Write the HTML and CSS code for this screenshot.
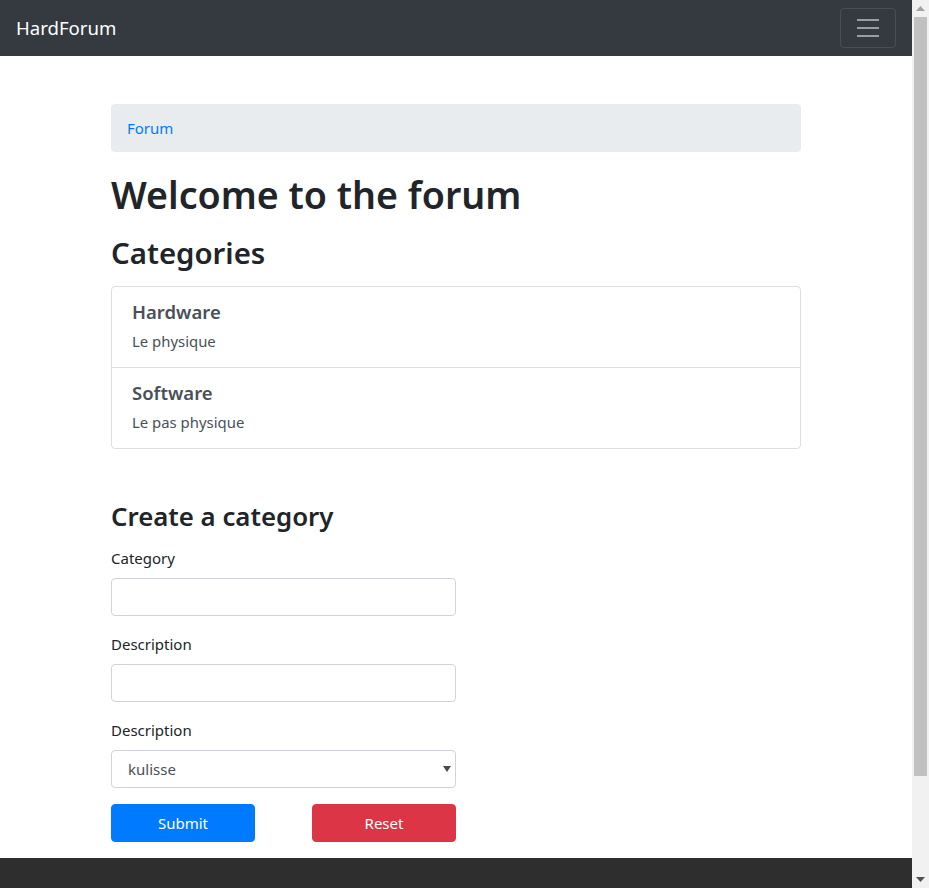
FILE: index.html
```html
<!DOCTYPE html>
<html lang="en">
<head>
<meta charset="utf-8">
<title>HardForum</title>
<link rel="stylesheet" href="styles.css">
</head>
<body>
<div class="frame">
  <div class="page">
    <nav class="navbar">
      <a class="brand" href="#">HardForum</a>
      <button class="toggler" type="button" aria-label="Toggle navigation">
        <svg width="30" height="30" viewBox="0 0 30 30"><path stroke="rgba(255,255,255,0.5)" stroke-width="2" stroke-linecap="butt" d="M4 7h22M4 15h22M4 23h22"/></svg>
      </button>
    </nav>
    <main class="container">
      <ol class="breadcrumb"><li><a href="#">Forum</a></li></ol>
      <h1 class="title">Welcome to the forum</h1>
      <h2 class="subtitle">Categories</h2>
      <div class="list-group">
        <a class="list-item" href="#">
          <h5 class="item-title">Hardware</h5>
          <p class="item-text">Le physique</p>
        </a>
        <a class="list-item" href="#">
          <h5 class="item-title">Software</h5>
          <p class="item-text">Le pas physique</p>
        </a>
      </div>
      <form class="create-form">
        <h3 class="form-title">Create a category</h3>
        <div class="form-group">
          <label class="label" for="cat">Category</label>
          <input class="control" id="cat" type="text">
        </div>
        <div class="form-group">
          <label class="label" for="desc">Description</label>
          <input class="control" id="desc" type="text">
        </div>
        <div class="form-group">
          <label class="label" for="sel">Description</label>
          <div class="select-wrap">
            <select class="control select" id="sel"><option>kulisse</option></select>
            <svg class="select-arrow" width="8" height="6" viewBox="0 0 8 6"><path d="M0 0h8L4 6z" fill="#4a4a4a"/></svg>
          </div>
        </div>
        <div class="buttons">
          <button class="btn btn-primary" type="submit">Submit</button>
          <button class="btn btn-danger" type="reset">Reset</button>
        </div>
      </form>
    </main>
    <footer class="footer"></footer>
  </div>
  <div class="scrollbar">
    <div class="sb-arrow"><svg width="9" height="5" viewBox="0 0 9 5"><path d="M0 5L4.5 0L9 5z" fill="#a3a3a3"/></svg></div>
    <div class="sb-track"><div class="sb-thumb"></div></div>
    <div class="sb-arrow"><svg width="9" height="5" viewBox="0 0 9 5"><path d="M0 0h9L4.5 5z" fill="#505050"/></svg></div>
  </div>
</div>
</body>
</html>
```

FILE: styles.css
```css
* { box-sizing: border-box; }
html, body { margin: 0; padding: 0; }
body {
  font-family: "Noto Sans", "Open Sans", sans-serif;
  font-size: 15px;
  line-height: 1.5;
  color: #212529;
  background: #fff;
}
.frame {
  display: flex;
  width: 929px;
  height: 888px;
  overflow: hidden;
}
.page {
  width: 912px;
  flex: 0 0 912px;
  display: flex;
  flex-direction: column;
}
.navbar {
  height: 56px;
  background: #343a40;
  display: flex;
  align-items: center;
  justify-content: space-between;
  padding: 8px 16px;
}
.brand {
  color: #fff;
  text-decoration: none;
  font-size: 18.6px;
  line-height: 30px;
}
.toggler {
  width: 56px;
  height: 40px;
  padding: 4px 12px;
  background: transparent;
  border: 1px solid rgba(255,255,255,0.1);
  border-radius: 4px;
  display: flex;
  align-items: center;
  justify-content: center;
}
.toggler svg { display: block; }
.container {
  width: 720px;
  margin: 0 auto;
  padding: 48px 15px 0;
}
.breadcrumb {
  list-style: none;
  margin: 0 0 16px;
  padding: 12px 16px;
  background: #e9ecef;
  border-radius: 4px;
  font-size: 15px;
  line-height: 24px;
}
.breadcrumb a { color: #007bff; text-decoration: none; }
.title {
  margin: 0 0 10px;
  font-size: 37.6px;
  line-height: 54px;
  font-weight: 600;
}
.subtitle {
  margin: 0 0 12px;
  font-size: 29.4px;
  line-height: 42px;
  font-weight: 600;
}
.list-group {
  border: 1px solid rgba(0,0,0,0.125);
  border-radius: 4px;
  margin-bottom: 50px;
}
.list-item {
  display: block;
  padding: 12px 20px;
  color: #495057;
  text-decoration: none;
}
.list-item + .list-item { border-top: 1px solid rgba(0,0,0,0.125); }
.item-title {
  margin: 0 0 4px;
  font-size: 18.5px;
  line-height: 26px;
  font-weight: 600;
}
.item-text { margin: 0 0 2px; font-size: 14.9px; line-height: 24px; }
.create-form { width: 345px; }
.form-title {
  margin: 0 0 13px;
  font-size: 25.8px;
  line-height: 34px;
  font-weight: 600;
}
.form-group { margin-bottom: 16px; }
.label {
  display: inline-block;
  margin-bottom: 8px;
  line-height: 24px;
}
.control {
  display: block;
  width: 100%;
  height: 38px;
  padding: 6px 12px;
  font-family: inherit;
  font-size: 15px;
  line-height: 24px;
  color: #495057;
  background: #fff;
  border: 1px solid #ced4da;
  border-radius: 4px;
}
.select-wrap { position: relative; }
.select {
  appearance: none;
  -webkit-appearance: none;
  padding-left: 16px;
}
.select-arrow {
  position: absolute;
  right: 5px;
  top: 16px;
}
.buttons {
  display: flex;
  justify-content: space-between;
  margin-bottom: 16px;
}
.btn {
  width: 144px;
  height: 38px;
  border: 1px solid transparent;
  border-radius: 4px;
  font-family: inherit;
  font-size: 15px;
  line-height: 24px;
  color: #fff;
}
.btn-primary { background: #007bff; border-color: #007bff; }
.btn-danger { background: #dc3545; border-color: #dc3545; }
.footer {
  flex: 1 0 auto;
  background: #2e2e2e;
}
.scrollbar {
  width: 17px;
  flex: 0 0 17px;
  background: #f1f1f1;
  display: flex;
  flex-direction: column;
}
.sb-arrow {
  height: 17px;
  display: flex;
  align-items: center;
  justify-content: center;
}
.sb-track { flex: 1; padding: 0 2px; }
.sb-thumb {
  height: 759px;
  background: #c1c1c1;
}
```
